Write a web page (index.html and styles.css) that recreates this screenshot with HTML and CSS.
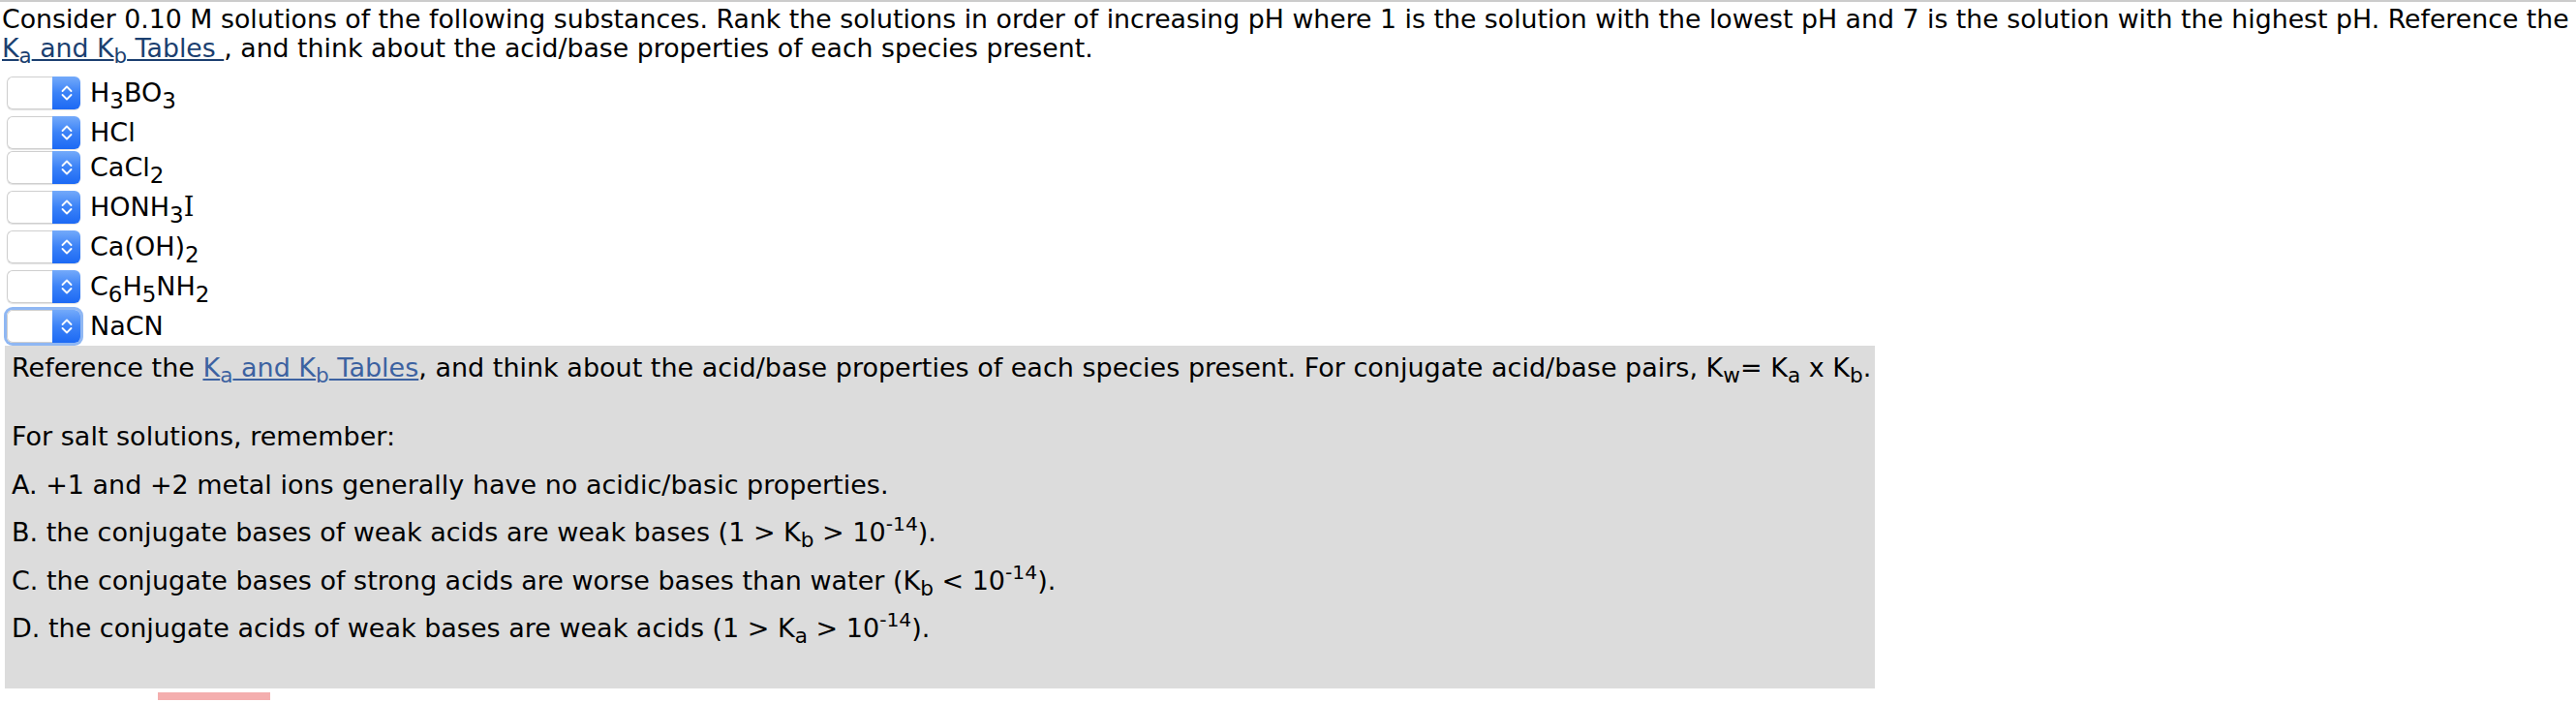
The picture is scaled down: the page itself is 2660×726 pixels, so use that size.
FILE: index.html
```html
<!DOCTYPE html>
<html lang="en">
<head>
<meta charset="utf-8">
<title>Rank solutions by pH</title>
<link rel="stylesheet" href="styles.css">
</head>
<body>
<div class="question">
  <p class="prompt">Consider 0.10 M solutions of the following substances. Rank the solutions in order of increasing pH where 1 is the solution with the lowest pH and 7 is the solution with the highest pH. Reference the<br><a class="ref-link" href="#">K<sub>a</sub> and K<sub>b</sub> Tables </a>, and think about the acid/base properties of each species present.</p>

  <div class="rank-list">
    <div class="row">
      <span class="select"><span class="sel-field"></span><span class="sel-btn"><svg viewBox="0 0 12 22" width="12" height="22"><path d="M1.5 9 L6 4.5 L10.5 9 M1.5 13 L6 17.5 L10.5 13"/></svg></span></span>
      <span class="label">H<sub>3</sub>BO<sub>3</sub></span>
    </div>
    <div class="row">
      <span class="select"><span class="sel-field"></span><span class="sel-btn"><svg viewBox="0 0 12 22" width="12" height="22"><path d="M1.5 9 L6 4.5 L10.5 9 M1.5 13 L6 17.5 L10.5 13"/></svg></span></span>
      <span class="label">HCl</span>
    </div>
    <div class="row">
      <span class="select"><span class="sel-field"></span><span class="sel-btn"><svg viewBox="0 0 12 22" width="12" height="22"><path d="M1.5 9 L6 4.5 L10.5 9 M1.5 13 L6 17.5 L10.5 13"/></svg></span></span>
      <span class="label">CaCl<sub>2</sub></span>
    </div>
    <div class="row">
      <span class="select"><span class="sel-field"></span><span class="sel-btn"><svg viewBox="0 0 12 22" width="12" height="22"><path d="M1.5 9 L6 4.5 L10.5 9 M1.5 13 L6 17.5 L10.5 13"/></svg></span></span>
      <span class="label">HONH<sub>3</sub><span class="serif-i">I</span></span>
    </div>
    <div class="row">
      <span class="select"><span class="sel-field"></span><span class="sel-btn"><svg viewBox="0 0 12 22" width="12" height="22"><path d="M1.5 9 L6 4.5 L10.5 9 M1.5 13 L6 17.5 L10.5 13"/></svg></span></span>
      <span class="label">Ca(OH)<sub>2</sub></span>
    </div>
    <div class="row">
      <span class="select"><span class="sel-field"></span><span class="sel-btn"><svg viewBox="0 0 12 22" width="12" height="22"><path d="M1.5 9 L6 4.5 L10.5 9 M1.5 13 L6 17.5 L10.5 13"/></svg></span></span>
      <span class="label">C<sub>6</sub>H<sub>5</sub>NH<sub>2</sub></span>
    </div>
    <div class="row">
      <span class="select focused"><span class="sel-field"></span><span class="sel-btn"><svg viewBox="0 0 12 22" width="12" height="22"><path d="M1.5 9 L6 4.5 L10.5 9 M1.5 13 L6 17.5 L10.5 13"/></svg></span></span>
      <span class="label">NaCN</span>
    </div>
  </div>

  <div class="hint">
    <p class="hint-line">Reference the <a class="hint-link" href="#">K<sub>a</sub> and K<sub>b</sub> Tables</a>, and think about the acid/base properties of each species present. For conjugate acid/base pairs, K<sub>w</sub>= K<sub>a</sub> x K<sub>b</sub>.</p>
    <p class="hint-line gap">For salt solutions, remember:</p>
    <p class="hint-item">A. +1 and +2 metal ions generally have no acidic/basic properties.</p>
    <p class="hint-item">B. the conjugate bases of weak acids are weak bases (1 &gt; K<sub>b</sub> &gt; 10<sup>-14</sup>).</p>
    <p class="hint-item">C. the conjugate bases of strong acids are worse bases than water (K<sub>b</sub> &lt; 10<sup>-14</sup>).</p>
    <p class="hint-item">D. the conjugate acids of weak bases are weak acids (1 &gt; K<sub>a</sub> &gt; 10<sup>-14</sup>).</p>
  </div>

  <div class="submit-bar"></div>
</div>
</body>
</html>
```

FILE: styles.css
```css
html, body {
  margin: 0;
  padding: 0;
  background: #ffffff;
}

body {
  font-family: "DejaVu Sans", Verdana, sans-serif;
  color: #000000;
  overflow: hidden;
}

.question {
  border-top: 2px solid #cccccc;
  padding: 3px 0 0 2px;
}

.prompt {
  margin: 0;
  font-size: 26.75px;
  line-height: 30px;
  white-space: nowrap;
}

.prompt sub,
.hint sub {
  font-size: 0.8em;
  vertical-align: -0.3em;
  line-height: 0;
}

.hint sup {
  font-size: 0.75em;
  vertical-align: 0.55em;
  line-height: 0;
}

.ref-link {
  color: #1b3f70;
  text-decoration: underline;
}

.rank-list {
  margin-top: 13px;
  padding-left: 5px;
}

.row {
  display: flex;
  align-items: flex-start;
}

.select {
  display: flex;
  width: 76px;
  height: 34px;
  margin: 1px 0;
  border-radius: 6px;
  box-sizing: border-box;
  flex: none;
  box-shadow: 0 1px 1px rgba(0, 0, 0, 0.12);
}

.select.focused {
  box-shadow: 0 0 0 3px #8fb7f3;
}

.sel-field {
  flex: 1;
  background: #ffffff;
  border: 1px solid #cfcfcf;
  border-right: none;
  border-radius: 6px 0 0 6px;
}

.sel-btn {
  width: 29px;
  display: flex;
  align-items: center;
  justify-content: center;
  border-radius: 0 6px 6px 0;
  background: linear-gradient(#74aafa, #3b82f7 50%, #1c69f4);
}

.sel-btn svg {
  display: block;
  fill: none;
  stroke: #ffffff;
  stroke-width: 1.8;
  stroke-linecap: round;
  stroke-linejoin: round;
}

.label {
  margin-left: 10px;
  font-size: 27px;
  line-height: 36px;
}

.label sub {
  font-size: 0.85em;
  vertical-align: -7px;
  line-height: 30px;
}

.serif-i {
  font-family: "DejaVu Serif", serif;
}

.hint {
  margin: 2px 0 0 3px;
  width: 1931px;
  box-sizing: border-box;
  background: #dcdcdc;
  padding: 6px 0 45px 7px;
  font-size: 27px;
  line-height: 33.5px;
}

.hint p {
  margin: 0;
}

.hint-line.gap {
  margin-top: 37.5px;
}

.hint-item {
  margin-top: 16px !important;
}

.hint-link {
  color: #3c62a1;
  text-decoration: underline;
}

.submit-bar {
  margin: 4px 0 0 161px;
  width: 116px;
  height: 8px;
  background: #f4aeae;
}
```
